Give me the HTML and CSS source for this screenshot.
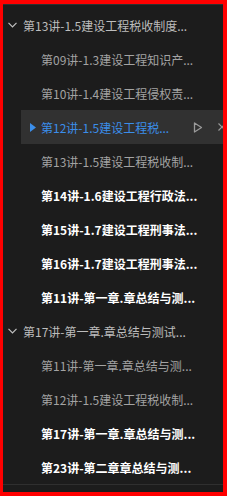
FILE: index.html
```html
<!DOCTYPE html>
<html lang="zh-CN">
<head>
<meta charset="utf-8">
<link rel="stylesheet" href="styles.css">
</head>
<body>
<div class="frame">
  <ul class="tree">
    <li class="row header">
      <span class="slot"><svg class="chev" width="9" height="6" viewBox="0 0 9 6"><path d="M0.5 0.8 L4.5 4.8 L8.5 0.8" fill="none" stroke="#c0c0c0" stroke-width="1.2"/></svg></span>
      <span class="label">第13讲-1.5建设工程税收制度...</span>
    </li>
    <li class="row child dim"><span class="label">第09讲-1.3建设工程知识产...</span></li>
    <li class="row child dim"><span class="label">第10讲-1.4建设工程侵权责...</span></li>
    <li class="row selected">
      <svg class="play-solid" width="6" height="9" viewBox="0 0 6 9"><path d="M0 0 L6 4.5 L0 9 Z" fill="#3b8eea"/></svg>
      <span class="label">第12讲-1.5建设工程税...</span>
      <span class="actions">
        <svg width="10" height="11" viewBox="0 0 10 11"><path d="M1.5 1 L8.5 5.5 L1.5 10 Z" fill="none" stroke="#9a9a9a" stroke-width="1.3" stroke-linejoin="round"/></svg>
        <svg width="10" height="10" viewBox="0 0 10 10"><path d="M1.5 1.5 L8.5 8.5 M8.5 1.5 L1.5 8.5" fill="none" stroke="#9a9a9a" stroke-width="1.2"/></svg>
      </span>
    </li>
    <li class="row child dim"><span class="label">第13讲-1.5建设工程税收制...</span></li>
    <li class="row child bright"><span class="label">第14讲-1.6建设工程行政法...</span></li>
    <li class="row child bright"><span class="label">第15讲-1.7建设工程刑事法...</span></li>
    <li class="row child bright"><span class="label">第16讲-1.7建设工程刑事法...</span></li>
    <li class="row child bright"><span class="label">第11讲-第一章.章总结与测...</span></li>
    <li class="row header">
      <span class="slot"><svg class="chev" width="9" height="6" viewBox="0 0 9 6"><path d="M0.5 0.8 L4.5 4.8 L8.5 0.8" fill="none" stroke="#c0c0c0" stroke-width="1.2"/></svg></span>
      <span class="label">第17讲-第一章.章总结与测试...</span>
    </li>
    <li class="row child dim"><span class="label">第11讲-第一章.章总结与测...</span></li>
    <li class="row child dim"><span class="label">第12讲-1.5建设工程税收制...</span></li>
    <li class="row child bright"><span class="label">第17讲-第一章.章总结与测...</span></li>
    <li class="row child bright"><span class="label">第23讲-第二章章总结与测...</span></li>
  </ul>
</div>
</body>
</html>
```

FILE: styles.css
```css
html, body {
  margin: 0;
  padding: 0;
  background: #ff0000;
}
.frame {
  width: 220px;
  height: 488px;
  margin: 4px 4px 4px 3px;
  background: #1c1c1c;
  border-top: 1px solid #2f2f2f;
  box-sizing: border-box;
  overflow: hidden;
  font-family: "Microsoft YaHei", "Noto Sans CJK SC", sans-serif;
  font-size: 12px;
}
.tree {
  list-style: none;
  margin: 0;
  padding: 3px 0 0 0;
  border-bottom: 1px solid #2f2f2f;
}
.row {
  height: 34px;
  display: flex;
  align-items: center;
  white-space: nowrap;
  overflow: hidden;
}
.header {
  padding-left: 4px;
  color: #bdbdbd;
}
.slot {
  width: 10px;
  display: flex;
  justify-content: center;
  margin-right: 6px;
}
.child {
  padding-left: 38px;
}
.dim {
  color: #a3a3a3;
}
.bright {
  color: #ffffff;
  font-weight: bold;
}
.selected {
  margin-left: 18px;
  padding-left: 9px;
  background: #313131;
  color: #3b8eea;
}
.play-solid {
  margin-right: 5px;
}
.selected .label {
  flex: 1;
}
.actions {
  display: flex;
  align-items: center;
  gap: 14px;
  margin-right: -4px;
}
```
